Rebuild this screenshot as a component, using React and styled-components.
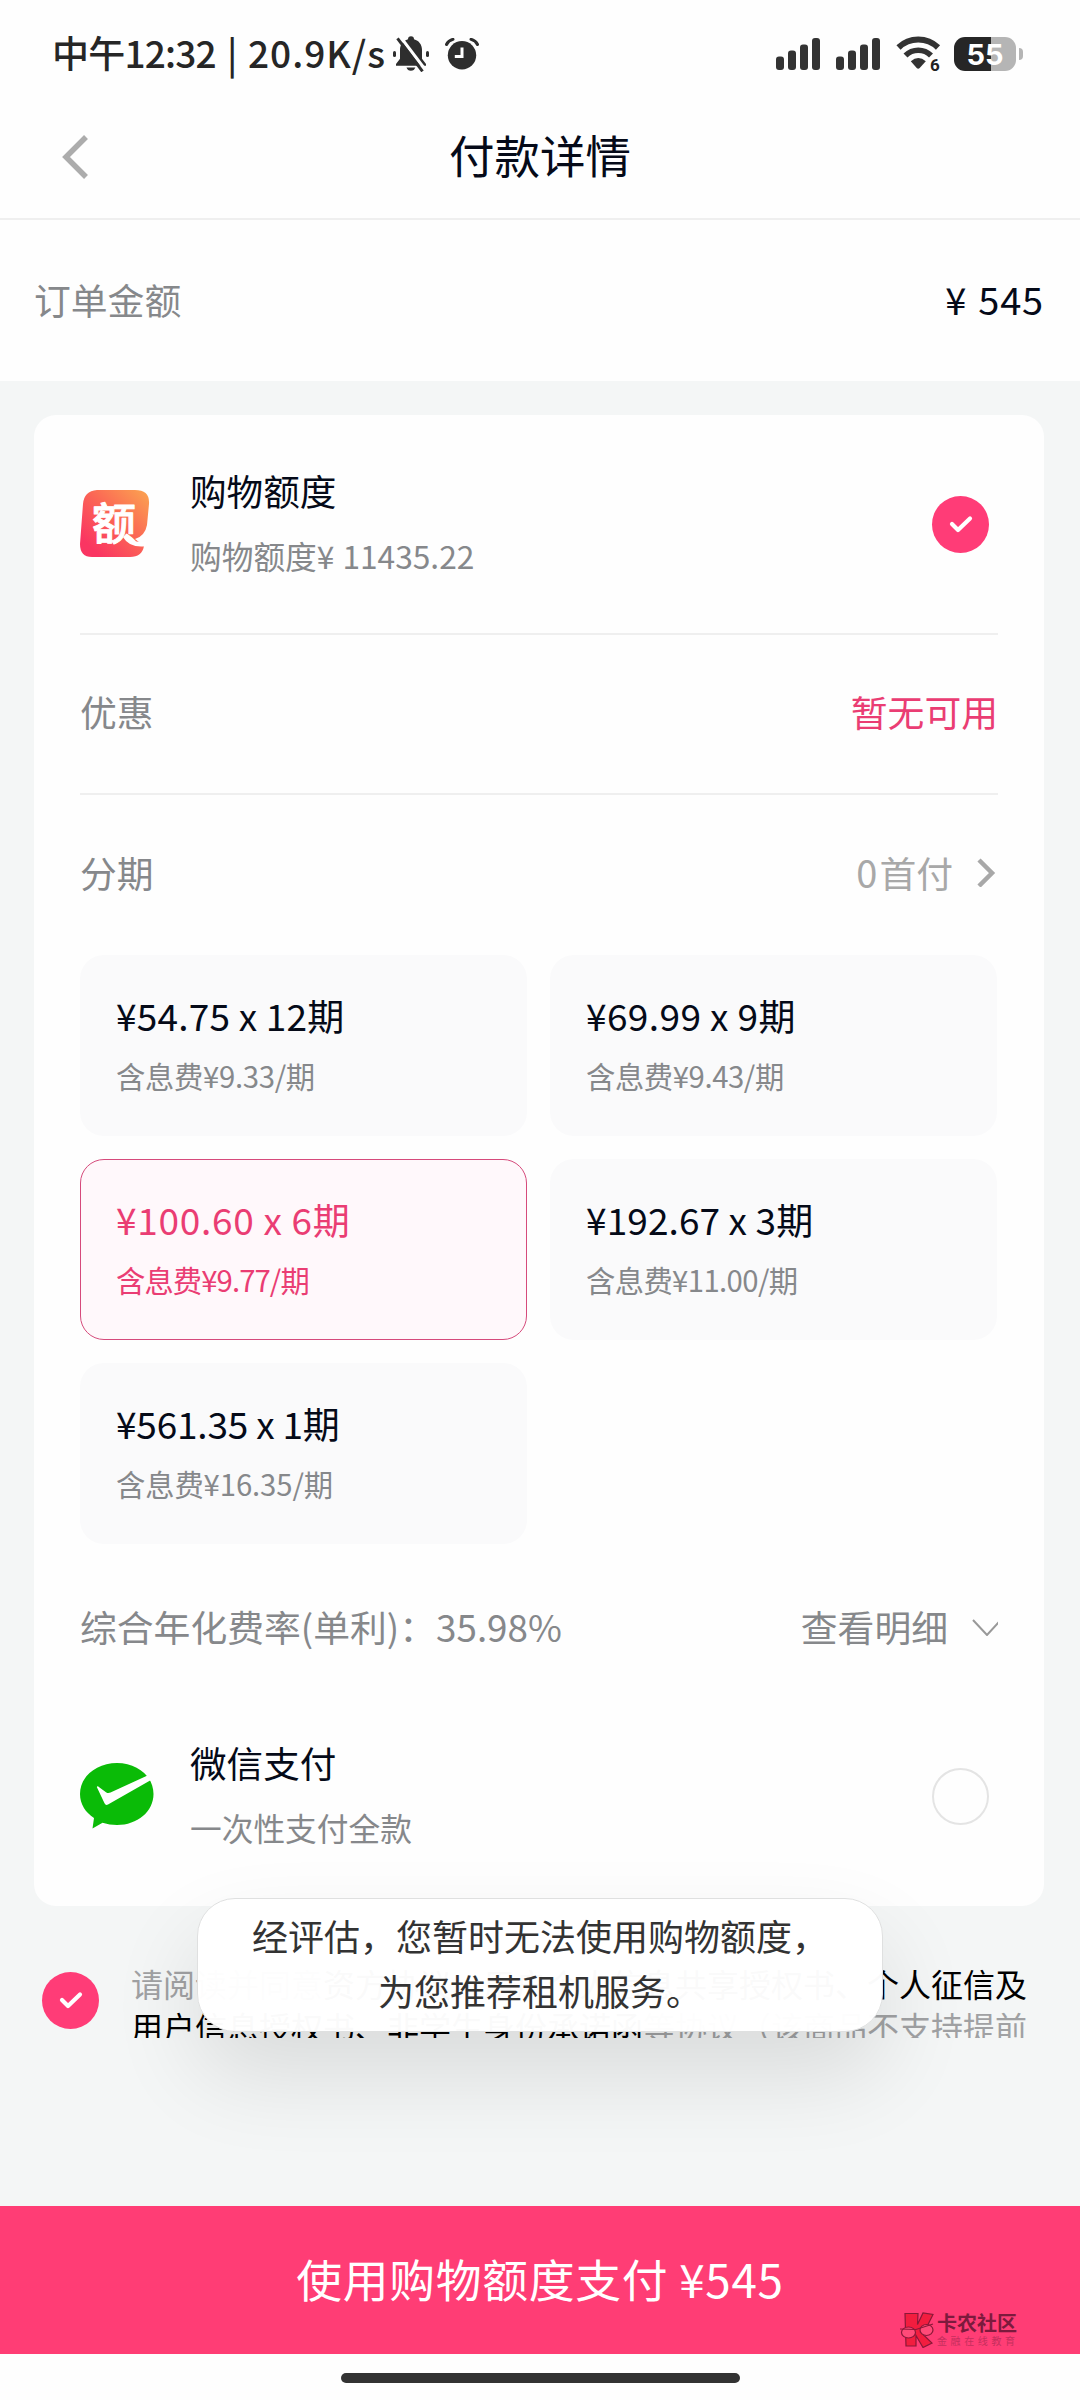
import React, { useState } from 'react';
import styled, { createGlobalStyle } from 'styled-components';

const plans = [
  { id: 12, price: '¥54.75 x 12期', fee: '含息费¥9.33/期', spacing: 0.2, feeSpacing: -0.3 },
  { id: 9, price: '¥69.99 x 9期', fee: '含息费¥9.43/期', spacing: 0.4, feeSpacing: -0.4 },
  { id: 6, price: '¥100.60 x 6期', fee: '含息费¥9.77/期', spacing: 0.7, feeSpacing: -0.9 },
  { id: 3, price: '¥192.67 x 3期', fee: '含息费¥11.00/期', spacing: 0.1, feeSpacing: -0.6 },
  { id: 1, price: '¥561.35 x 1期', fee: '含息费¥16.35/期', spacing: -0.2, feeSpacing: -0.1 },
];

const SilentIcon = () => (
  <svg width="36" height="36" viewBox="0 0 36 36">
    <g fill="#2e2e2e">
      <path d="M15 3.2a3 3 0 0 1 6 0c5 1.400 8 5.500 8 10.500v9l4 5.300v1.800H3v-1.800l4-5.300v-9c0-5 3-9.100 8-10.500z" />
      <path d="M13.500 31.500h8.800c-.6 2-2.200 3.300-4.400 3.300s-3.900-1.300-4.400-3.300z" />
      <rect x="0" y="15" width="3" height="6" rx="1.500" />
      <rect x="33" y="15" width="3" height="6" rx="1.500" />
    </g>
    <path d="M7.500 1l25 33" stroke="#fefefe" strokeWidth="3" />
    <path d="M4.500 2.300l25 33" stroke="#2e2e2e" strokeWidth="3" />
  </svg>
);

const AlarmIcon = () => (
  <svg width="34" height="32" viewBox="0 0 34 32">
    <circle cx="17" cy="17.200" r="14.200" fill="#2e2e2e" />
    <path d="M1.500 6.500C2.800 3.700 5 2 8 1.300M32.500 6.500C31.200 3.700 29 2 26 1.300" stroke="#2e2e2e" strokeWidth="3" fill="none" strokeLinecap="round" />
    <path d="M17 9.500v9H9.800" stroke="#fff" strokeWidth="3" fill="none" />
  </svg>
);

const SignalIcon = () => (
  <svg width="44" height="34" viewBox="0 0 44 34" fill="#333">
    <rect x="0" y="19.500" width="8" height="13.500" rx="3" />
    <rect x="12" y="13.500" width="8" height="19.500" rx="3" />
    <rect x="24" y="7.500" width="8" height="25.500" rx="3" />
    <rect x="36" y="1" width="8" height="32" rx="3" />
  </svg>
);

const WifiIcon = () => (
  <svg width="46" height="38" viewBox="0 0 46 38">
    <path d="M2.500 12.500a28.500 28.500 0 0 1 39.500 0" stroke="#333" strokeWidth="6" fill="none" />
    <path d="M9.500 20.500a18 18 0 0 1 25.500 0" stroke="#333" strokeWidth="5.600" fill="none" />
    <path d="M14.800 26.200q7.500-6.200 15 0L23.700 33q-1.500 1.300-3 0z" fill="#333" />
    <text x="34" y="36" fontSize="17" fontWeight="700" fontFamily="Roboto, sans-serif" fill="#222" stroke="#fefefe" strokeWidth="3" paintOrder="stroke">6</text>
  </svg>
);

const Chevron = ({ w, h, points, color, stroke }) => (
  <svg width={w} height={h} viewBox={`0 0 ${w} ${h}`}>
    <polyline points={points} fill="none" stroke={color} strokeWidth={stroke} />
  </svg>
);

const QuotaLogo = () => (
  <svg width="74" height="68" viewBox="0 0 74 68">
    <defs>
      <linearGradient id="quota" x1="0" y1="1" x2="1" y2="0">
        <stop offset="0.150" stopColor="#fa3562" />
        <stop offset="0.550" stopColor="#fb6655" />
        <stop offset="1" stopColor="#fba550" />
      </linearGradient>
    </defs>
    <path d="M17 0H55Q70 0 69 14L67 35Q65 46 55 49L64 56Q62 67 50 67H12Q0 67 0 54L3 14Q4 1 17 0Z" fill="url(#quota)" />
    <text x="12" y="50" fontSize="44" fontWeight="500" fill="#fff" stroke="#fff" strokeWidth="1" strokeLinejoin="round" fontFamily="'Noto Sans CJK SC', sans-serif">额</text>
    <path d="M45 46Q51 56 66 54" stroke="#fff" strokeWidth="4.500" fill="none" />
  </svg>
);

const WechatLogo = () => (
  <svg width="74" height="66" viewBox="0 0 74 66">
    <path d="M37 0C57.500 0 73.500 13.500 73.500 31S57.500 62 37 62q-7.500 0-14.500-2.200L12.500 65.500l1.500-10.500C5.500 49.500 0 41 0 31 0 13.500 16.500 0 37 0z" fill="#0abb07" />
    <path d="M16.800 24q.6-1.500 2.400.2l6.800 5q2 1.500 4.500.4L67.500 12.500l3.500 4.500L28 41.500q-2.300 1.200-3.500-1.200z" fill="#fff" />
  </svg>
);

const CommunityLogo = () => (
  <svg width="34" height="36" viewBox="0 0 34 36" stroke="#8a1838" strokeWidth="1.200">
    <path d="M5 1.500h13l-.5 11L23 1l10 1.500-7 14L20.500 20 32 31l-9 4.500-7-12V34H6z" fill="#f21d3f" />
    <ellipse cx="8.500" cy="20.500" rx="7" ry="5.500" fill="#ff4a78" />
    <ellipse cx="26.500" cy="18" rx="6.500" ry="5.500" fill="#ff4a78" />
    <path d="M0 17l16 .5L33 12" fill="none" />
  </svg>
);

const Check = () => (
  <CheckCircle>
    <svg width="24" height="20" viewBox="0 0 24 20">
      <path d="M3 10l6 6L21 4.500" fill="none" stroke="#fff" strokeWidth="4.200" strokeLinecap="round" strokeLinejoin="round" />
    </svg>
  </CheckCircle>
);

const App = () => {
  const [active, setActive] = useState(6);

  return (
    <Page>
      <GlobalStyle />
      <StatusBar>
        <div className="left">
          <Clock>
            <span className="time">中午12:32</span>
            <span className="bar">|</span>
            <span className="speed">20.9K/s</span>
          </Clock>
          <SilentIcon />
          <AlarmIcon />
        </div>
        <div className="right">
          <SignalIcon />
          <SignalIcon />
          <WifiIcon />
          <Battery>
            <div className="cell">55</div>
            <div className="nub" />
          </Battery>
        </div>
      </StatusBar>

      <NavBar>
        <Chevron w={26} h={44} points="24,2 4,22 24,42" color="#acacac" stroke={5.5} />
        <h1>付款详情</h1>
      </NavBar>

      <OrderRow>
        <Label>订单金额</Label>
        <Amount>¥ 545</Amount>
      </OrderRow>

      <Body>
        <Card>
          <PayRow $line>
            <div className="logo"><QuotaLogo /></div>
            <div className="info">
              <h2>购物额度</h2>
              <p className="money">购物额度¥ 11435.22</p>
            </div>
            <Check />
          </PayRow>

          <Row $line>
            <Label>优惠</Label>
            <Label $color="#ea3d73">暂无可用</Label>
          </Row>

          <Row>
            <Label>分期</Label>
            <More>
              <Label $color="#a8a8a8"><i>0</i>首付</Label>
              <Chevron w={22} h={30} points="3,3 16,16 3,29" color="#a8a8a8" stroke={4.5} />
            </More>
          </Row>

          <Plans>
            {plans.map((plan) => (
              <Plan key={plan.id} $active={plan.id === active} $spacing={plan.spacing} $feeSpacing={plan.feeSpacing} onClick={() => setActive(plan.id)}>
                <h3>{plan.price}</h3>
                <p>{plan.fee}</p>
              </Plan>
            ))}
          </Plans>

          <Row $tall>
            <Label>综合年化费率(单利)：35.98%</Label>
            <More $detail>
              <Label>查看明细</Label>
              <Chevron w={26} h={20} points="1,4 15,19 27,6" color="#999" stroke={2} />
            </More>
          </Row>

          <PayRow $short>
            <div className="logo"><WechatLogo /></div>
            <div className="info">
              <h2>微信支付</h2>
              <p>一次性支付全款</p>
            </div>
            <EmptyCircle />
          </PayRow>
        </Card>

        <Agreement>
          <Check />
          <p>
            请阅读并同意<b>资方协议、用户个人信息共享授权书、个人征信及用户信息授权书、非学生身份承诺函</b>等协议（该商品不支持提前
          </p>
        </Agreement>
      </Body>

      <PayButton>使用购物额度支付 ¥545</PayButton>
      <HomeArea><span /></HomeArea>

      <Toast>
        经评估，您暂时无法使用购物额度，<br />为您推荐租机服务。
      </Toast>

      <Watermark>
        <CommunityLogo />
        <div>
          <strong>卡农社区</strong>
          <small>金融在线教育</small>
        </div>
      </Watermark>
    </Page>
  );
};

const GlobalStyle = createGlobalStyle`
  * {
    box-sizing: border-box;
    margin: 0;
    padding: 0;
  }
  body {
    background: #fefefe;
    font-family: 'Noto Sans CJK SC', sans-serif;
  }
  svg {
    display: block;
    flex-shrink: 0;
  }
`;

const Page = styled.div`
  position: relative;
  width: 1080px;
  height: 2400px;
  overflow: hidden;
  display: flex;
  flex-direction: column;
  background: #fefefe;
`;

const StatusBar = styled.div`
  height: 108px;
  display: flex;
  justify-content: space-between;
  padding: 0 57px 0 52px;
  .left, .right {
    display: flex;
    align-items: center;
  }
  .left svg + svg {
    margin-left: 16px;
  }
  .right {
    gap: 16px;
  }
`;

const Clock = styled.div`
  display: flex;
  width: 341px;
  font-size: 37px;
  line-height: 54px;
  font-weight: 500;
  color: #262626;
  white-space: nowrap;
  padding-bottom: 4px;
  .time {
    width: 166px;
    letter-spacing: -0.8px;
  }
  .bar {
    width: 30px;
    padding-left: 9px;
  }
  .speed {
    letter-spacing: 1px;
  }
`;

const Battery = styled.div`
  display: flex;
  align-items: center;
  gap: 3px;
  margin-left: -4px;
  .cell {
    width: 62px;
    height: 34px;
    border-radius: 11px;
    background: linear-gradient(90deg, #262626 60%, #b5b5b5 60%);
    color: #fff;
    font: 700 29px/35px Inter, sans-serif;
    text-align: center;
  }
  .nub {
    width: 4px;
    height: 12px;
    border-radius: 0 4px 4px 0;
    background: #b5b5b5;
  }
`;

const NavBar = styled.div`
  height: 112px;
  display: grid;
  grid-template-columns: 100px 1fr 100px;
  align-items: center;
  padding: 0 61px 13px;
  border-bottom: 2px solid #efefef;
  > svg {
    margin-left: 1px;
  }
  h1 {
    text-align: center;
    font-size: 45.5px;
    line-height: 60px;
    font-weight: 400;
    color: #050a18;
    padding-bottom: 5px;
  }
`;

const OrderRow = styled.div`
  height: 161px;
  display: flex;
  align-items: center;
  justify-content: space-between;
  padding: 0 36px 4px 34px;
`;

const Label = styled.span`
  font-size: 36.8px;
  line-height: 50px;
  color: ${(p) => p.$color || '#86888b'};
  white-space: nowrap;
  i {
    font-style: normal;
    font-size: 38px;
    letter-spacing: 2px;
  }
`;

const Amount = styled.span`
  font-size: 38px;
  line-height: 50px;
  letter-spacing: 0.8px;
  word-spacing: 2px;
  color: #050a18;
`;

const Body = styled.div`
  flex: 1;
  background: #f4f6f6;
  padding: 34px 36px 0 34px;
`;

const Card = styled.div`
  height: 1491px;
  border-radius: 22px;
  background: #fefefe;
  padding: 0 46px;
`;

const PayRow = styled.div`
  height: ${(p) => (p.$short ? 168 : 220)}px;
  display: flex;
  align-items: center;
  padding-right: 9px;
  ${(p) => p.$line && 'border-bottom: 2px solid #efefef;'}
  .logo {
    width: 110px;
  }
  .info {
    flex: 1;
    padding-top: 1px;
  }
  h2 {
    font-size: 36.6px;
    line-height: 65px;
    font-weight: 400;
    color: #050a18;
  }
  p {
    font-size: 31.7px;
    line-height: 65px;
    color: #86888b;
    margin-bottom: 3px;
  }
  .money {
    letter-spacing: 0;
    word-spacing: 1px;
  }
`;

const Row = styled.div`
  height: ${(p) => (p.$tall ? 168 : 160)}px;
  display: flex;
  align-items: center;
  justify-content: space-between;
  padding-bottom: ${(p) => (p.$tall ? 5 : 6)}px;
  ${(p) => p.$line && 'border-bottom: 2px solid #efefef;'}
`;

const More = styled.div`
  display: flex;
  align-items: center;
  gap: ${(p) => (p.$detail ? 24 : 23)}px;
`;

const CheckCircle = styled.div`
  width: 57px;
  height: 57px;
  flex-shrink: 0;
  border-radius: 50%;
  background: #ff3c77;
  display: flex;
  align-items: center;
  justify-content: center;
`;

const EmptyCircle = styled.div`
  width: 57px;
  height: 57px;
  border-radius: 50%;
  border: 2px solid #e4e4e4;
`;

const Plans = styled.div`
  display: grid;
  grid-template-columns: 447px 447px;
  grid-auto-rows: 181px;
  gap: 23px;
`;

const Plan = styled.div`
  border-radius: 24px;
  padding: 32px 0 0 35px;
  border: 1.5px solid ${(p) => (p.$active ? '#d64a7b' : 'transparent')};
  background: ${(p) => (p.$active ? '#fff8fb' : '#fafafb')};
  background-clip: ${(p) => (p.$active ? 'padding-box' : 'border-box')};
  cursor: pointer;
  white-space: nowrap;
  h3 {
    font-size: 37px;
    line-height: 55px;
    font-weight: 400;
    letter-spacing: ${(p) => p.$spacing}px;
    color: ${(p) => (p.$active ? '#ea3d73' : '#050a18')};
  }
  p {
    font-size: 29.3px;
    line-height: 64px;
    letter-spacing: ${(p) => p.$feeSpacing}px;
    color: ${(p) => (p.$active ? '#ea3d73' : '#86888b')};
  }
`;

const Agreement = styled.div`
  display: flex;
  align-items: center;
  margin: 56px 0 0 8px;
  p {
    width: 900px;
    height: 76px;
    overflow: hidden;
    margin-left: 32px;
    font-size: 32px;
    line-height: 42.5px;
    color: #a0a1a3;
    word-break: break-all;
  }
  b {
    font-weight: 400;
    color: #000;
  }
`;

const PayButton = styled.div`
  height: 148px;
  background: #ff3d75;
  color: #fff;
  font-size: 45.8px;
  line-height: 144px;
  letter-spacing: 0.7px;
  text-align: center;
`;

const HomeArea = styled.div`
  height: 46px;
  padding-top: 19px;
  display: flex;
  justify-content: center;
  span {
    width: 399px;
    height: 10px;
    border-radius: 5px;
    background: #333;
  }
`;

const Toast = styled.div`
  position: absolute;
  left: 197px;
  top: 1898px;
  width: 686px;
  height: 134px;
  padding-top: 9px;
  border: 1px solid #dfe0e0;
  border-radius: 38px;
  background: rgba(255, 255, 255, 0.98);
  box-shadow: 0 42px 90px rgba(0, 0, 0, 0.11);
  font-size: 36px;
  line-height: 55px;
  color: #333;
  text-align: center;
  white-space: nowrap;
`;

const Watermark = styled.div`
  position: absolute;
  left: 900px;
  top: 2312px;
  display: flex;
  gap: 3px;
  div {
    display: flex;
    flex-direction: column;
  }
  strong {
    font-size: 20px;
    line-height: 22px;
    font-weight: 700;
    color: #7c1a3d;
  }
  small {
    font-size: 10px;
    line-height: 14px;
    letter-spacing: 3.6px;
    color: #c52f5d;
  }
`;

export default App;
